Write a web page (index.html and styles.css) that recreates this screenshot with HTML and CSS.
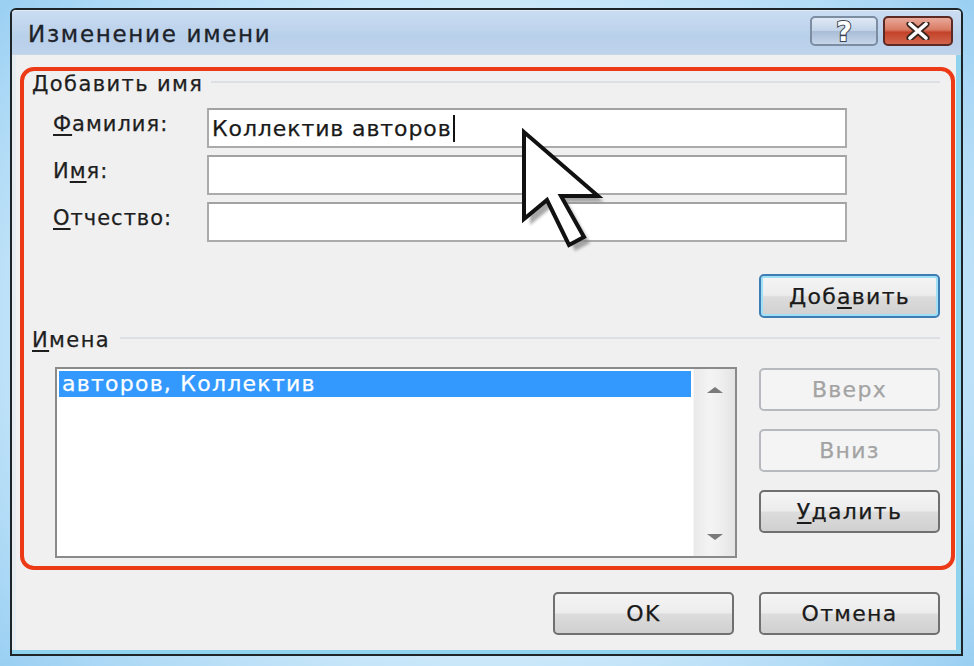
FILE: index.html
```html
<!DOCTYPE html>
<html lang="ru">
<head>
<meta charset="utf-8">
<title>Изменение имени</title>
<link rel="stylesheet" href="styles.css">
</head>
<body>
<div class="window">
  <div class="titlebar">
    <span class="title">Изменение имени</span>
    <div class="tb-buttons">
      <div class="tb-btn tb-help"><span class="qmark">?</span></div>
      <div class="tb-btn tb-close">
        <svg width="30" height="18" viewBox="0 0 30 18">
          <path d="M7 2 L23 16 M23 2 L7 16" stroke="#3a2620" stroke-width="7" stroke-linecap="round" fill="none"/>
          <path d="M7 2 L23 16 M23 2 L7 16" stroke="#ffffff" stroke-width="3.6" stroke-linecap="round" fill="none"/>
        </svg>
      </div>
    </div>
  </div>
  <div class="content">
    <div class="highlight">
      <div class="group-head head-add">
        <span class="group-title">Добавить имя</span>
        <span class="rule"></span>
      </div>
      <div class="fields">
        <label class="flabel"><u>Ф</u>амилия:</label>
        <div class="input"><span class="val">Коллектив авторов</span><span class="caret"></span></div>
        <label class="flabel">И<u>м</u>я:</label>
        <div class="input"></div>
        <label class="flabel"><u>О</u>тчество:</label>
        <div class="input"></div>
      </div>
      <div class="add-row">
        <div class="btn btn-default">Доб<u>а</u>вить</div>
      </div>
      <div class="group-head head-names">
        <span class="group-title"><u>И</u>мена</span>
        <span class="rule"></span>
      </div>
      <div class="names-row">
        <div class="listbox">
          <div class="list-items">
            <div class="list-item selected">авторов, Коллектив</div>
          </div>
          <div class="scrollbar">
            <svg class="arrow" width="20" height="10" viewBox="0 0 20 10"><path d="M2 8 L10 2 L18 8 Z" fill="#7a7a7a"/></svg>
            <svg class="arrow" width="20" height="10" viewBox="0 0 20 10"><path d="M2 2 L10 8 L18 2 Z" fill="#7a7a7a"/></svg>
          </div>
        </div>
        <div class="side-buttons">
          <div class="btn btn-disabled">Вверх</div>
          <div class="btn btn-disabled">Вниз</div>
          <div class="btn"><u>У</u>далить</div>
        </div>
      </div>
    </div>
    <div class="footer">
      <div class="btn">OK</div>
      <div class="btn">Отмена</div>
    </div>
  </div>
  <svg class="cursor" width="100" height="135" viewBox="0 0 100 135">
    <defs>
      <filter id="blur" x="-20%" y="-20%" width="140%" height="140%"><feGaussianBlur stdDeviation="1.6"/></filter>
    </defs>
    <path d="M8 5 L8 92 L31 73 L53 118 L68 110 L45 69 L82 69 Z" transform="translate(6,6)" fill="#8a8a8a" opacity="0.75" filter="url(#blur)"/>
    <path d="M8 5 L8 92 L31 73 L53 118 L68 110 L45 69 L82 69 Z" fill="#ffffff" stroke="#111111" stroke-width="4" stroke-linejoin="miter"/>
  </svg>
</div>
</body>
</html>
```
FILE: styles.css
```css
* { box-sizing: border-box; }
html, body { margin: 0; padding: 0; }
body {
  width: 974px;
  height: 666px;
  overflow: hidden;
  font-family: "DejaVu Sans", "Open Sans", sans-serif;
  color: #1e1e1e;
  background:
    radial-gradient(ellipse 70% 80% at 50% 50%, #f2f9fe 0%, #d3ecfb 55%, #a9d7f5 85%, #92cbf1 100%);
  padding: 8px 0 0 10px;
}
u { text-decoration: underline; text-decoration-thickness: 2px; text-underline-offset: 3px; }

.window {
  position: relative;
  width: 953px;
  height: 648px;
  border: 2px solid #1d2529;
  border-radius: 6px 6px 0 0;
  background: #f0f0f0;
  box-shadow: inset -5px -4px 0 #8fd3ee, inset 4px 0 0 #e6ecf0;
  display: flex;
  flex-direction: column;
}

.titlebar {
  height: 45px;
  flex: none;
  display: flex;
  align-items: center;
  justify-content: space-between;
  padding: 0 8px 0 16px;
  border-radius: 4px 4px 0 0;
  background: linear-gradient(#cadcf1, #b9d0ea 60%, #bed3ec);
  border-top: 1px solid #e4edf7;
  border-bottom: 1px solid #c9d6e3;
}
.title {
  font-size: 23px;
  color: #1c2229;
  letter-spacing: 1.7px;
  margin-top: 2px;
  -webkit-text-stroke: 0.3px #1c2229;
}
.tb-buttons { display: flex; gap: 5px; align-self: flex-start; margin-top: 5px; }
.tb-btn {
  height: 30px;
  border-radius: 5px;
  display: flex;
  align-items: center;
  justify-content: center;
}
.tb-help {
  width: 68px;
  border: 2px solid #7c8da2;
  background: linear-gradient(#dfe9f5, #c3d4e8 48%, #a9bdd6 52%, #c6d6ea);
}
.qmark {
  font-family: "DejaVu Sans", sans-serif;
  font-weight: bold;
  font-size: 27px;
  color: #ffffff;
  -webkit-text-stroke: 2px #3a4450;
  paint-order: stroke fill;
  line-height: 1;
  margin-top: 1px;
}
.tb-close {
  width: 70px;
  border: 2px solid #5b2a25;
  background: linear-gradient(#e9a99a, #d97a63 45%, #c3432a 55%, #d2654c);
}

.content {
  flex: 1;
  padding: 12px 6px 0 8px;
  display: flex;
  flex-direction: column;
}

.highlight {
  border: 4px solid #ec3a16;
  border-radius: 14px;
  padding: 0 11px 8px 0;
}

.group-head {
  height: 26px;
  display: flex;
  align-items: center;
  padding-left: 8px;
}
.group-title {
  font-size: 21px;
  color: #1e1e1e;
  white-space: nowrap;
  letter-spacing: 1.4px;
  -webkit-text-stroke: 0.25px #1e1e1e;
}
.rule {
  flex: 1;
  height: 2px;
  background: #dcdfe3;
  margin-top: -4px;
}
.head-add .rule { margin-left: 8px; }
.head-names .rule { margin-left: 10px; }
.head-names { margin-top: 9px; }

.fields {
  display: grid;
  grid-template-columns: 154px 640px;
  grid-auto-rows: 40px;
  row-gap: 7px;
  margin: 11px 0 0 29px;
  align-items: center;
}
.flabel {
  font-size: 21px;
  color: #1e1e1e;
  margin-top: -8px;
  letter-spacing: 1px;
  -webkit-text-stroke: 0.25px #1e1e1e;
}
.input {
  height: 40px;
  background: #ffffff;
  border: 2px solid #ababab;
  border-top-color: #a2a2a2;
  display: flex;
  align-items: center;
  padding-left: 3px;
}
.val {
  font-size: 22px;
  color: #1a1a1a;
  letter-spacing: 0.9px;
  -webkit-text-stroke: 0.25px #1a1a1a;
}
.caret { width: 2px; height: 27px; background: #111; margin-left: 1px; }

.add-row { display: flex; justify-content: flex-end; margin-top: 32px; }

.btn {
  width: 181px;
  height: 43px;
  border: 2px solid #707070;
  border-radius: 5px;
  background: linear-gradient(#f5f5f5, #ececec 48%, #dcdcdc 52%, #d0d0d0);
  display: flex;
  align-items: center;
  justify-content: center;
  font-size: 22px;
  letter-spacing: 1.3px;
  color: #1a1a1a;
  -webkit-text-stroke: 0.25px currentColor;
}
.btn-default {
  height: 44px;
  border-color: #3d7db6;
  box-shadow: inset 0 0 0 2px #9fe0f6;
}
.btn-disabled {
  border-color: #b6babe;
  background: #f4f4f4;
  color: #a3a3a3;
}

.names-row {
  display: flex;
  margin: 14px 0 0 31px;
  gap: 22px;
  align-items: flex-start;
}
.listbox {
  width: 682px;
  height: 191px;
  border: 2px solid #8a8a8a;
  background: #ffffff;
  display: flex;
  padding: 2px;
}
.list-items { flex: 1; }
.list-item {
  height: 26px;
  font-size: 22px;
  line-height: 26px;
  padding-left: 3px;
  letter-spacing: 1.25px;
  -webkit-text-stroke: 0.25px currentColor;
}
.list-item.selected { background: #3399ff; color: #ffffff; }
.scrollbar {
  width: 42px;
  margin: -2px -2px -2px 2px;
  background: linear-gradient(90deg, #eaeaea, #f4f4f4 40%, #f0f0f0 60%, #e4e4e4);
  border-left: 1px solid #f6f6f6;
  display: flex;
  flex-direction: column;
  align-items: center;
  justify-content: space-between;
  padding: 16px 0 14px;
}

.side-buttons {
  display: flex;
  flex-direction: column;
  gap: 18px;
  margin-top: 1px;
}
.side-buttons .btn { height: 43px; }

.footer {
  display: flex;
  justify-content: flex-end;
  gap: 25px;
  margin-top: 22px;
  padding-right: 15px;
}

.cursor {
  position: absolute;
  left: 504px;
  top: 117px;
}
```
